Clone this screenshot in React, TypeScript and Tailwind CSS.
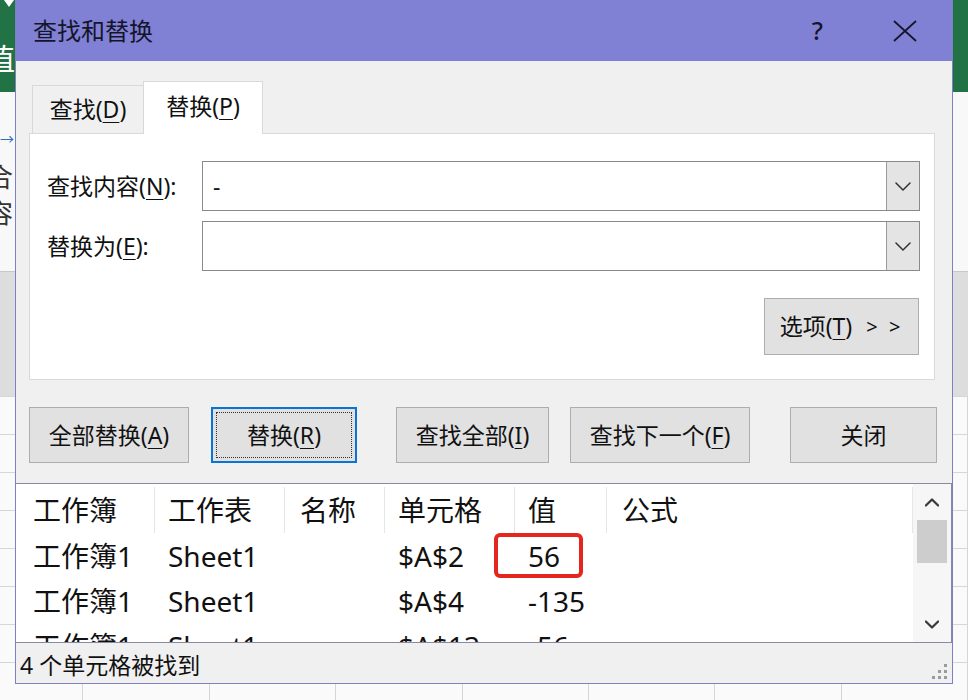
import React from 'react';

const font = "font-['Noto_Sans','Noto_Sans_CJK_SC',sans-serif]";

function Key({ k }: { k: string }) {
  return <span className="underline decoration-1 underline-offset-[4px]">{k}</span>;
}

function Chevron({ up = false, bold = false }: { up?: boolean; bold?: boolean }) {
  return (
    <svg width={bold ? 14 : 16} height={bold ? 9 : 9} viewBox="0 0 16 9" fill="none">
      <polyline
        points={up ? '1,8 8,1 15,8' : '1,1 8,8 15,1'}
        stroke={bold ? '#3a3a3a' : '#333'}
        strokeWidth={bold ? 2.6 : 1.5}
        strokeLinecap="round"
        strokeLinejoin="round"
      />
    </svg>
  );
}

function ComboInput({ value }: { value?: string }) {
  return (
    <div className="flex h-[50px] flex-1 border border-[#8a8a8a] bg-white">
      <div className="flex flex-1 items-center pl-[10px] text-[23px] text-[#1a1a1a]">{value}</div>
      <div className="flex w-[33px] items-center justify-center border-l border-[#9a9a9a] bg-[#e4e4e4]">
        <Chevron />
      </div>
    </div>
  );
}

function ExcelBackdrop() {
  const rows = Array.from({ length: 8 });
  const cols = [95, 144, 144, 144, 144, 144, 144, 144];
  return (
    <div className="absolute inset-0 flex flex-col">
      <div className="relative h-[98px] overflow-hidden bg-[#217346]">
        <div className="absolute left-[4px] top-[0px] h-0 w-0 border-x-[5px] border-t-[7px] border-x-transparent border-t-white" />
        <div className="absolute left-[-15px] top-[44px] text-[30px] leading-none text-white">值</div>
      </div>
      <div className="relative h-[192px] overflow-hidden bg-[#f8f8f8]">
        <div className="absolute left-[0px] top-[40px] text-[14px] leading-none text-[#2f6fc0]">→</div>
        <div className="absolute left-[-13px] top-[72px] text-[26px] leading-none text-[#333]">合</div>
        <div className="absolute left-[-13px] top-[108px] text-[26px] leading-none text-[#333]">容</div>
      </div>
      <div className="h-[133px] border-t border-[#c8c8c8] bg-[#dddddd]" />
      <div className="relative flex-1 bg-[#fafafa]">
        {rows.map((_, i) => (
          <div key={i} className="h-[38px] border-t border-[#d6d6d6]" />
        ))}
        <div className="absolute inset-0 flex">
          {cols.map((w, i) => (
            <div key={i} className="h-full border-r border-[#d6d6d6]" style={{ width: w }} />
          ))}
        </div>
      </div>
    </div>
  );
}

const headers = ['工作簿', '工作表', '名称', '单元格', '值', '公式'];
const colW = ['w-[139px] pl-[17px]', 'w-[130px] pl-[13px]', 'w-[100px] pl-[15px]', 'w-[130px] pl-[13px]', 'w-[92px] pl-[13px]', 'w-[306px] pl-[15px]'];
const rows = [
  ['工作簿1', 'Sheet1', '', '$A$2', '56', ''],
  ['工作簿1', 'Sheet1', '', '$A$4', '-135', ''],
  ['工作簿1', 'Sheet1', '', '$A$13', '-56', ''],
];

export default function App() {
  return (
    <div className={`relative h-[700px] w-[968px] overflow-hidden bg-[#fafafa] ${font}`}>
      <ExcelBackdrop />

      <div className="absolute left-[15px] top-0 flex h-[684px] w-[938px] flex-col border-x border-b border-[#7f7fc6] bg-[#f0f0f0] text-[#111]">
        {/* title bar */}
        <div className="flex h-[61px] items-center bg-[#8080d5] pl-[17px] pr-[35px]">
          <span className="text-[24px] leading-none text-[#15152a]">查找和替换</span>
          <span className="ml-auto text-[25px] font-medium leading-none text-[#15152a]">?</span>
          <svg className="ml-[70px]" width="24" height="22" viewBox="0 0 24 22">
            <path d="M1 1 L23 21 M23 1 L1 21" stroke="#15152a" strokeWidth="1.7" />
          </svg>
        </div>

        {/* tabs */}
        <div className="mt-[20px] flex h-[52px] items-end pl-[16px]">
          <div className="flex h-[48px] w-[111px] items-center justify-center border-l border-t border-[#d9d9d9] text-[23px]">
            查找(<Key k="D" />)
          </div>
          <div className="relative z-10 -mb-px flex h-[53px] w-[120px] items-center justify-center border border-b-0 border-[#d9d9d9] bg-white pb-[4px] text-[23px]">
            替换(<Key k="P" />)
          </div>
        </div>

        {/* panel */}
        <div className="ml-[13px] mr-[17px] flex h-[247px] flex-col border border-[#d9d9d9] bg-white pl-[17px] pr-[14px] pt-[27px]">
          <div className="flex items-center">
            <div className="w-[155px] text-[23px]">
              查找内容(<Key k="N" />):
            </div>
            <ComboInput value="-" />
          </div>
          <div className="mt-[10px] flex items-center">
            <div className="w-[155px] text-[23px]">
              替换为(<Key k="E" />):
            </div>
            <ComboInput />
          </div>
          <div className="mt-[27px] flex justify-end pr-px">
            <div className="flex h-[57px] w-[155px] items-center justify-center border border-[#adadad] bg-[#e1e1e1] text-[23px]">
              <span>
                选项(<Key k="T" />)
              </span>
              <span className="ml-[14px] text-[20px] tracking-[3px]">&gt; &gt;</span>
            </div>
          </div>
        </div>

        {/* buttons */}
        <div className="mt-[27px] flex h-[56px]">
          <div className="ml-[13px] flex w-[160px] items-center justify-center border border-[#adadad] bg-[#e1e1e1] text-[23px]">
            全部替换(<Key k="A" />)
          </div>
          <div className="relative ml-[22px] flex w-[146px] items-center justify-center border-2 border-[#0a74d4] bg-[#e1e1e1] text-[23px]">
            <div className="absolute inset-[3px] border border-dotted border-[#333]" />
            替换(<Key k="R" />)
          </div>
          <div className="ml-[39px] flex w-[153px] items-center justify-center border border-[#adadad] bg-[#e1e1e1] text-[23px]">
            查找全部(<Key k="I" />)
          </div>
          <div className="ml-[21px] flex w-[180px] items-center justify-center border border-[#adadad] bg-[#e1e1e1] text-[23px]">
            查找下一个(<Key k="F" />)
          </div>
          <div className="ml-[40px] flex w-[147px] items-center justify-center border border-[#adadad] bg-[#e1e1e1] text-[23px]">
            关闭
          </div>
        </div>

        {/* results list */}
        <div className="relative mt-[20px] flex h-[160px] overflow-hidden border-y border-r border-[#868aa6] bg-white">
          <div className="flex-1 overflow-hidden">
            <div className="flex h-[52px]">
              {headers.map((h, i) => (
                <div key={h} className={`flex items-center ${colW[i]} relative text-[28px]`}>
                  {h}
                  <div className="absolute bottom-[3px] right-0 top-[3px] w-px bg-[#e6e6e6]" />
                </div>
              ))}
            </div>
            {rows.map((r, ri) => (
              <div key={ri} className="flex h-[45px] pb-[5px]">
                {r.map((c, ci) => (
                  <div key={ci} className={`flex items-center whitespace-nowrap ${colW[ci]} text-[28px]`}>
                    {c}
                  </div>
                ))}
              </div>
            ))}
          </div>
          <div className="flex w-[38px] flex-col bg-[#f6f6f6]">
            <div className="flex h-[36px] items-center justify-center">
              <Chevron up bold />
            </div>
            <div className="mx-[4px] h-[43px] bg-[#cdcdcd]" />
            <div className="flex-1" />
            <div className="flex h-[36px] items-center justify-center">
              <Chevron bold />
            </div>
          </div>
          <div className="absolute left-[478px] top-[49px] h-[45px] w-[89px] rounded-[6px] border-[4px] border-[#e5261f]" />
        </div>

        {/* status bar */}
        <div className="relative flex h-[40px] items-center pl-[4px] pt-[4px] text-[23px]">
          <span>4 个单元格被找到</span>
          <div className="absolute bottom-[4px] right-[5px] flex flex-col items-end gap-[3px]">
            <div className="flex gap-[3px]">
              <div className="h-[3px] w-[3px] bg-[#9a9a9a]" />
            </div>
            <div className="flex gap-[3px]">
              <div className="h-[3px] w-[3px] bg-[#9a9a9a]" />
              <div className="h-[3px] w-[3px] bg-[#9a9a9a]" />
            </div>
            <div className="flex gap-[3px]">
              <div className="h-[3px] w-[3px] bg-[#9a9a9a]" />
              <div className="h-[3px] w-[3px] bg-[#9a9a9a]" />
              <div className="h-[3px] w-[3px] bg-[#9a9a9a]" />
            </div>
          </div>
        </div>
      </div>
    </div>
  );
}
